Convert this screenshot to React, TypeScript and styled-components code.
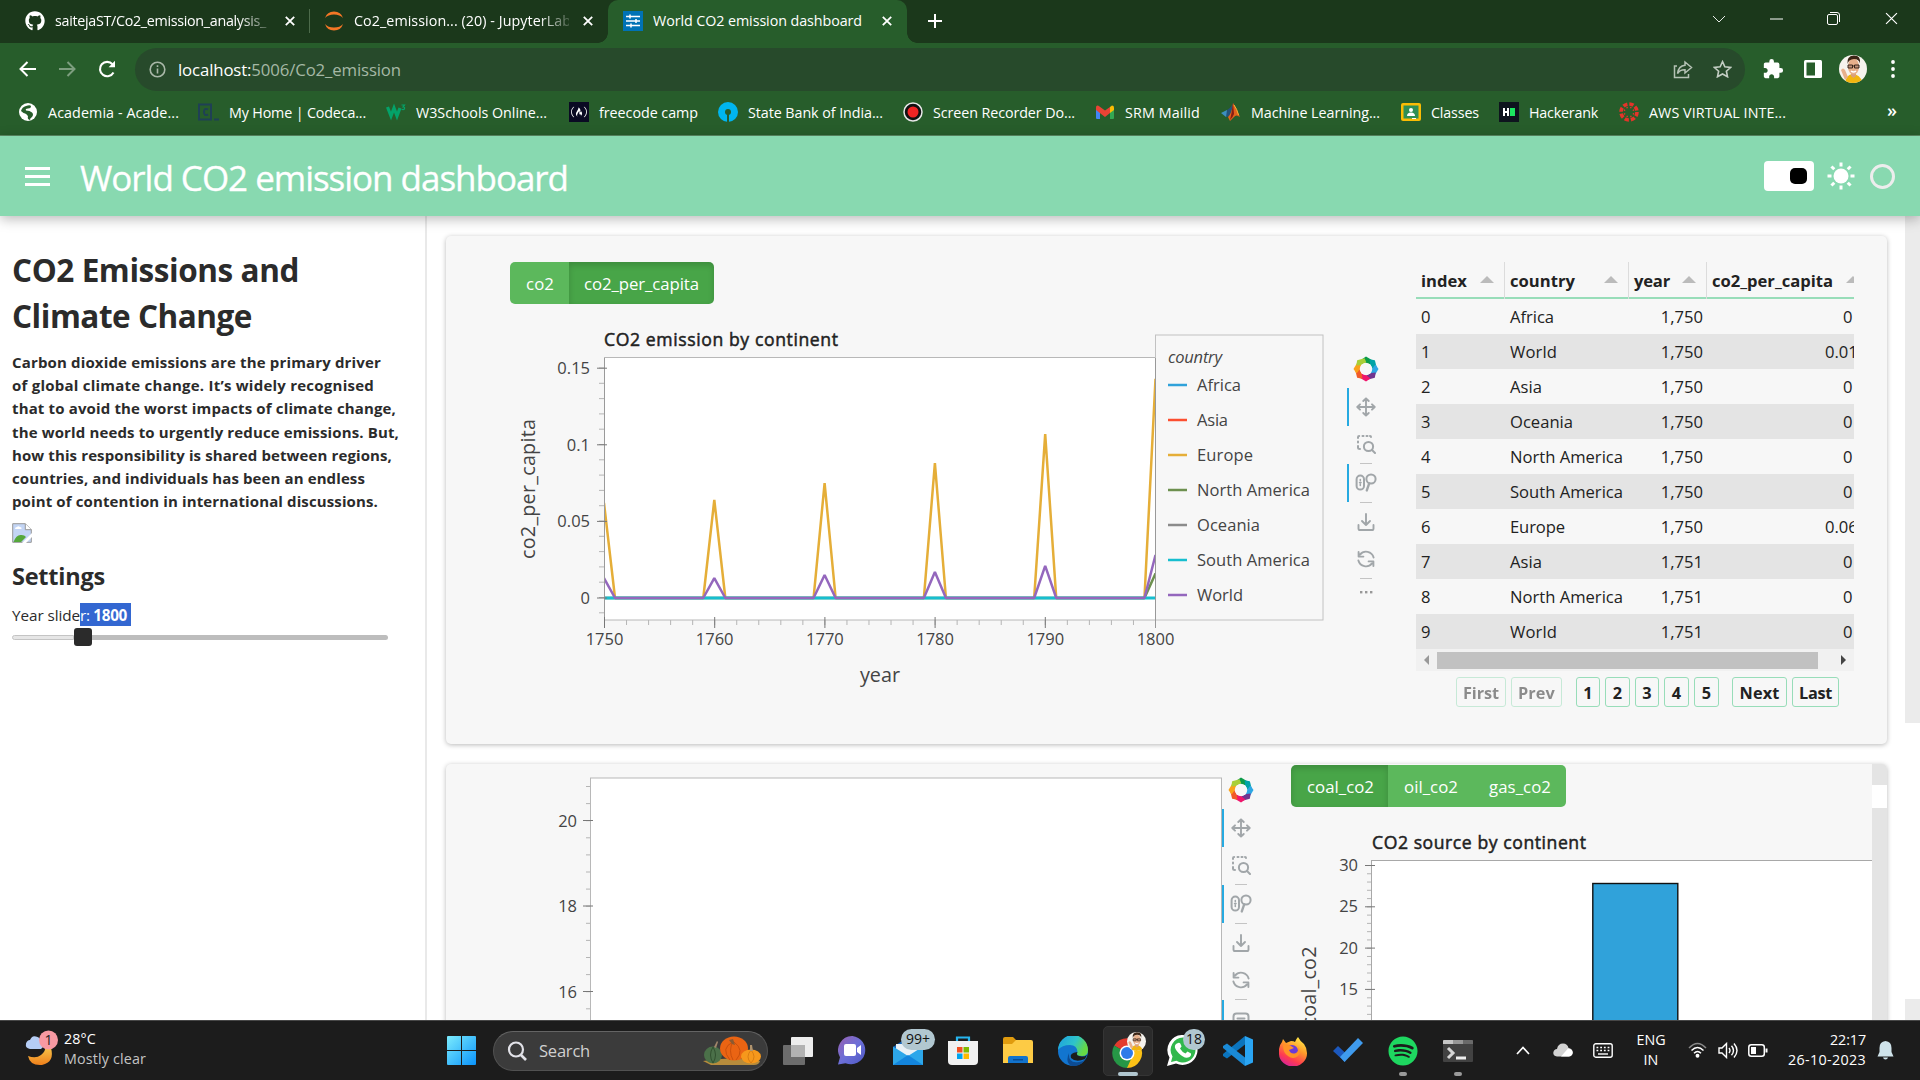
import React, { useLayoutEffect, useRef, useState } from 'react';
import styled, { createGlobalStyle, css } from 'styled-components';
import { FaGithub, FaSpotify, FaFirefoxBrowser, FaFreeCodeCamp } from 'react-icons/fa';
import { MdExtension } from 'react-icons/md';

const Global = createGlobalStyle`
  * { box-sizing: border-box; }
  body { margin: 0; background: #fff; overflow: hidden; }
  body, svg text { font-family: "Open Sans", "Noto Sans", sans-serif; }
  svg { display: block; flex: none; }
`;

/* ---------- text that spreads over a given width ---------- */
const FitText = styled.span<{ $w: number }>`
  display: block;
  flex: none;
  width: ${p => p.$w}px;
  white-space: nowrap;
`;
function Fit({ w, children }: { w: number; children: React.ReactNode }) {
  const ref = useRef<HTMLSpanElement>(null);
  const [spacing, setSpacing] = useState(0);
  useLayoutEffect(() => {
    const el = ref.current!;
    const n = (el.textContent || '').length;
    setSpacing((w - el.getBoundingClientRect().width) / n);
  }, [w]);
  return (
    <FitText $w={w}><span ref={ref} style={{ letterSpacing: spacing }}>{children}</span></FitText>
  );
}

const Screen = styled.div`
  width: 1920px; height: 1080px; overflow: hidden;
  display: flex; flex-direction: column; background: #fff;
`;

/* ---------- browser chrome ---------- */
const TabStrip = styled.div`
  height: 43px; flex: none; background: #1b381b; display: flex; color: #fff; font-size: 14.3px;
`;
const Tab = styled.div<{ $w: number; $active?: boolean; $pad: number; $line?: boolean }>`
  position: relative;
  width: ${p => p.$w}px; padding-left: ${p => p.$pad}px; height: 43px; padding-bottom: 2px;
  display: flex; align-items: center; gap: 10px;
  ${p => p.$line && css`&::after { content: ''; position: absolute; right: 0; top: 9px; height: 24px; width: 1px; background: #4d6b4b; }`}
  ${p => p.$active && css`
    background: #275d2b; border-radius: 10px 10px 0 0;
    &::before, &::after { content: ''; position: absolute; bottom: 0; width: 10px; height: 10px; }
    &::before { left: -10px; background: radial-gradient(circle at 0 0, transparent 9.5px, #275d2b 10px); }
    &::after { right: -10px; background: radial-gradient(circle at 100% 0, transparent 9.5px, #275d2b 10px); }
  `}
`;
const TabTitle = styled.div<{ $w: number; $fade?: boolean }>`
  width: ${p => p.$w}px; overflow: hidden;
  ${p => p.$fade && css`mask-image: linear-gradient(90deg, #000 86%, rgba(0,0,0,.2));`}
`;
const TabClose = styled.div<{ $gap: number }>`margin-left: ${p => p.$gap}px;`;
const PlusSlot = styled.div`padding: 13px 0 0 20px; flex: 1;`;
const WindowButtons = styled.div`display: flex; align-items: center; width: 230px; height: 37px;`;
const WinSlot = styled.div`width: 57.5px; display: flex; justify-content: center;`;

const NavBar = styled.div`
  height: 52px; flex: none; background: #275d2b; display: flex; align-items: center; padding-left: 7px;
`;
const NavSlot = styled.div<{ $w?: number }>`width: ${p => p.$w || 40}px; display: flex; justify-content: center;`;
const UrlBar = styled.div`
  width: 1610px; height: 43px; margin: 0 8px 0 8px; border-radius: 22px; background: #274a2b;
  display: flex; align-items: center; padding: 0 4px 0 14px; color: #a5b8a5; font-size: 16.8px;
  b { font-weight: 400; color: #fff; }
`;
const UrlText = styled.div`margin-left: 12px; flex: 1;`;
const Bookmarks = styled.div`
  height: 41px; flex: none; background: #275d2b; border-bottom: 1px solid #5c8a63;
  display: flex; align-items: center; padding: 0 0 6px 18px; color: #fff; font-size: 14.3px;
`;
const Bookmark = styled.div<{ $w: number }>`width: ${p => p.$w}px; display: flex; align-items: center; gap: 10px;`;
const More = styled.div`margin-left: auto; width: 33px; font-size: 18px; font-weight: 600; padding-bottom: 4px;`;

/* ---------- dashboard header ---------- */
const Header = styled.header`
  height: 80px; flex: none; background: #88d9b0; display: flex; align-items: center; padding: 0 25px 0 25px;
  color: #fff; font-size: 35px; position: relative; z-index: 2;
  box-shadow: 0 3px 12px rgba(0,0,0,.28);
`;
const Burger = styled.div`
  width: 25px; height: 19px; margin-right: 30px; border: solid #fff; border-width: 3px 0;
  display: flex; align-items: center;
  &::before { content: ''; width: 100%; height: 3px; background: #fff; }
`;
const HeadTitle = styled.div`flex: 1; padding-top: 4px; line-height: 44px; -webkit-text-stroke: .3px #fff;`;
const Toggle = styled.div`
  width: 50px; height: 30px; border-radius: 4px; background: #fff; padding: 7px; display: flex; justify-content: flex-end;
  &::after { content: ''; width: 17px; height: 16px; border-radius: 5px; background: #000; }
`;
const Sun = styled.svg`margin-left: 13px;`;
const Ring = styled.div`width: 25px; height: 25px; border: 3.5px solid #ededed; border-radius: 50%; margin-left: 15px;`;

const Body = styled.div`height: 804px; flex: none; display: flex; overflow: hidden;`;
const Sidebar = styled.aside`
  width: 427px; flex: none; border-right: 2px solid #e9e9e9; padding: 31px 13px 0 12px; color: #2b2b2b;
`;
const H1 = styled.h1`margin: 0; font-size: 31.5px; line-height: 46px; font-weight: 700;`;
const Para = styled.div`margin-top: 12px; font-size: 15px; font-weight: 700; line-height: 23.2px;`;
const H2 = styled.h2`margin: 14px 0 0; font-size: 23.5px; line-height: 38px; font-weight: 700;`;
const BrokenSlot = styled.div`margin-top: 10px;`;
const SliderLabel = styled.div`
  display: flex; margin-top: 8px; height: 23px; line-height: 24px; font-size: 15.3px;
`;
const Selected = styled.div`background: #3367d1; color: #fff; width: 51px; height: 23px; b { font-weight: 700; }`;
const Slider = styled.div`
  margin-top: 2px; width: 376px; height: 18px; display: flex; align-items: center;
`;
const TrackDone = styled.div`width: 62px; height: 5px; border: 1px solid #c4c4c4; background: #e6e6e6; border-radius: 3px 0 0 3px;`;
const Knob = styled.div`width: 18px; height: 18px; background: #2b2b2b; border-radius: 3px;`;
const TrackRest = styled.div`flex: 1; height: 5px; background: #bdbdbd; border-radius: 0 3px 3px 0;`;

const Main = styled.main`flex: 1; padding: 20px 0 0 19px; display: flex; flex-direction: column; gap: 20px;`;
const Card = styled.section<{ $h: number }>`
  width: 1441px; height: ${p => p.$h}px; flex: none; background: #f7f7f7; border-radius: 5px;
  box-shadow: 0 1px 5px rgba(0,0,0,.28); display: flex; overflow: hidden;
`;
const PageScroll = styled.div`
  width: 15px; flex: none; background: #ebebeb; padding-top: 507px;
  &::before { content: ''; display: block; height: 276px; background: #fff; }
`;

const Pane = styled.div<{ $l: number; $t: number; $w: number }>`
  flex: none; width: ${p => p.$w}px; margin-left: ${p => p.$l}px; padding-top: ${p => p.$t}px;
`;
const BtnGroup = styled.div`display: inline-flex; height: 42px; border-radius: 5px; overflow: hidden; vertical-align: top;`;
const Btn = styled.div<{ $w: number; $on?: boolean; $p: number }>`
  width: ${p => p.$w}px; height: 42px; padding: 0 0 0 ${p => p.$p}px; line-height: 44px; color: #fff; font-size: 16.8px;
  background: ${p => (p.$on ? '#48a548' : '#5cb85c')};
  ${p => p.$on && css`box-shadow: inset 0 3px 6px rgba(0,0,0,.16);`}
`;

/* ---------- plot toolbar ---------- */
const Tools = styled.div<{ $t: number; $w: number }>`
  width: ${p => p.$w}px; flex: none; padding-top: ${p => p.$t}px; display: flex; flex-direction: column;
`;
const ToolCell = styled.div<{ $on?: boolean; $h?: number; $lift?: number }>`
  height: ${p => p.$h || 38}px; width: 37px; flex: none; display: flex; align-items: center; justify-content: center;
  padding: 0 1px ${p => p.$lift || 0}px 0;
  border-left: 2px solid ${p => (p.$on ? '#26aae1' : 'transparent')};
`;
const ToolSep = styled.div`height: 1px; width: 12px; background: #c4c4c4; margin: 0 0 0 13px; flex: none;`;

function BokehLogo() {
  const c = ['#0c9b49', '#00a3a6', '#2da7e4', '#71358f', '#f0156b', '#f15a29', '#faa21b', '#a8cf38'];
  return (
    <svg width="26" height="26" viewBox="-13 -13 26 26">
      {c.map((k, i) => (
        <path key={k} transform={`rotate(${i * 45})`} fill={k} d="M0 -12.5 L6.6 -8.6 L5 -4.6 L-.8 -6.6 L-4.4 -9.4 Z" />
      ))}
      <circle r="6" fill="#f7f7f7" />
    </svg>
  );
}
const stroke = { fill: 'none', stroke: '#a1a6a9', strokeWidth: 2, strokeLinecap: 'round' as const, strokeLinejoin: 'round' as const };
const PanIcon = () => (
  <svg width="20" height="20" viewBox="0 0 20 20" {...stroke} strokeWidth={1.9}>
    <path d="M10 1.500v17M1.500 10h17M7.300 4 10 1.300 12.700 4M7.300 16l2.700 2.700 2.700-2.700M4 7.300 1.300 10 4 12.700M16 7.300l2.700 2.700L16 12.700" />
  </svg>
);
const BoxZoomIcon = () => (
  <svg width="20" height="20" viewBox="0 0 20 20" {...stroke}>
    <path d="M2 4V3.200Q2 2 3.200 2M6.500 2h1M10.500 2h1M14 2q1 0 1 1M2 7.500v1M2 12v1.500Q2 15 4 15" />
    <circle cx="12.500" cy="12.500" r="4.600" /><path d="m16 16 3 3" />
  </svg>
);
const WheelIcon = () => (
  <svg width="22" height="20" viewBox="0 0 22 20" {...stroke}>
    <rect x="1.600" y="2.600" width="7.400" height="14" rx="3.700" />
    <path d="M5.300 6.600v1M5.300 11.400v1M4.600 9.600h1.400" strokeWidth="1.600" />
    <circle cx="16" cy="6" r="4.600" /><path d="m14.200 10.400-2.400 7" strokeWidth="2.400" />
  </svg>
);
const SaveIcon = () => (
  <svg width="18" height="20" viewBox="0 0 18 20" {...stroke}>
    <path d="M9 2v11M5 9l4 4 4-4M1.500 13v3.400q0 1.600 1.600 1.600h11.800q1.600 0 1.600-1.600V13" strokeWidth="1.900" />
  </svg>
);
const ResetIcon = () => (
  <svg width="18" height="18" viewBox="0 0 18 18" {...stroke}>
    <path d="M16.600 7.500A7.800 7.800 0 0 0 3 4.600M1.600 2v4.600h4.800M1.400 10.500A7.800 7.800 0 0 0 15 13.400M16.400 16v-4.600h-4.800" strokeWidth="1.900" />
  </svg>
);
const HoverIcon = () => (
  <svg width="18" height="20" viewBox="0 0 18 20" {...stroke}>
    <rect x="1.500" y="1.500" width="15" height="15" rx="3" /><path d="M5.500 6.500h7M5.500 10.500h7" />
  </svg>
);
function ToolColumn({ top, width, more }: { top: number; width: number; more?: boolean }) {
  return (
    <Tools $t={top} $w={width}>
      <ToolCell $h={31} $lift={7}><BokehLogo /></ToolCell>
      <ToolCell $on $lift={1}><PanIcon /></ToolCell>
      <ToolCell $h={37} $lift={1}><BoxZoomIcon /></ToolCell>
      <ToolSep />
      <ToolCell $on><WheelIcon /></ToolCell>
      <ToolSep />
      <ToolCell><SaveIcon /></ToolCell>
      <ToolCell $h={37} $lift={1}><ResetIcon /></ToolCell>
      <ToolSep />
      {more ? (
        <ToolCell $h={26}>
          <svg width="14" height="3" viewBox="0 0 14 3" fill="#989898"><rect x="1" width="2.400" height="2.400" /><rect x="6" width="2.400" height="2.400" /><rect x="11" width="2.400" height="2.400" /></svg>
        </ToolCell>
      ) : <ToolCell $on $h={44}><HoverIcon /></ToolCell>}
    </Tools>
  );
}

/* ---------- charts ---------- */
const Label = ({ x, y, a = 'start', s = 16.5, w, children, ...r }: any) => (
  <text x={x} y={y} textAnchor={a} fontSize={s} fill="#444" {...(w ? { textLength: w, lengthAdjust: 'spacing' } : {})} {...r}>{children}</text>
);
const titleStyle = { s: 17.6, fill: '#222', stroke: '#222', strokeWidth: 0.5 };
const range = (n: number) => Array.from({ length: n }, (_, i) => i);

function EmissionChart() {
  const X = (yr: number) => 604 + (yr - 1750) * 11.03;
  const Y = (v: number) => 598 - v * 1532;
  const peaks = (v: number[]) => {
    const pts: string[] = [];
    v.forEach((p, i) => {
      const yr = 1750 + i * 10;
      if (i) pts.push(`${X(yr - 1)},${Y(0)}`);
      pts.push(`${X(yr)},${Y(p)}`);
      pts.push(`${X(yr + 1)},${Y(0)}`);
    });
    return pts.join(' ');
  };
  const legend: [string, string, number][] = [['Africa', '#30a2da', 44], ['Asia', '#fc4f30', 31], ['Europe', '#e5ae38', 56], ['North America', '#6d904f', 113], ['Oceania', '#8b8b8b', 63], ['South America', '#17becf', 113], ['World', '#9467bd', 46]];
  return (
    <svg width="830" height="400" viewBox="510 304 830 400">
      <clipPath id="plotA"><rect x="604" y="358" width="551" height="262" /></clipPath>
      <rect x="604.5" y="357.5" width="551" height="262.5" fill="#fff" stroke="#b8b8b8" />
      <g clipPath="url(#plotA)" fill="none" strokeWidth="2.5" strokeLinejoin="bevel">
        <polyline points={peaks([0.062, 0.064, 0.075, 0.088, 0.107, 0.143])} stroke="#e5ae38" />
        <polyline points={peaks([0, 0, 0, 0, 0, 0.016])} stroke="#6d904f" />
        <path d="M604 598H1155" stroke="#17becf" strokeWidth="2.800" />
        <polyline points={peaks([0.013, 0.013, 0.015, 0.017, 0.021, 0.028])} stroke="#9467bd" />
      </g>
      <path d="M604.5 358V620" stroke="#9a9a9a" />
      {range(18).map(i => { const y = 612.8 - i * 15.3; return y > 358 && <path key={i} d={`M599 ${y}H604`} stroke="#b5b5b5" />; })}
      {range(26).map(i => <path key={i} d={`M${604.5 + i * 22.04} 620V625`} stroke="#b5b5b5" />)}
      {['0', '0.05', '0.1', '0.15'].map((t, i) => (
        <g key={t}><path d={`M597 ${598 - i * 76.6}H607`} stroke="#777" /><Label x={590} y={604 - i * 76.6} a="end">{t}</Label></g>
      ))}
      {range(6).map(i => (
        <g key={i}><path d={`M${604.5 + i * 110.2} 617V628`} stroke="#777" /><Label x={604.5 + i * 110.2} y={645} a="middle">{1750 + i * 10}</Label></g>
      ))}
      <Label x={604} y={346} w={234} {...titleStyle}>CO2 emission by continent</Label>
      <Label x={880} y={682} a="middle" s={19.8}>year</Label>
      <Label x={0} y={0} w={140} s={19.8} transform="translate(535 559) rotate(-90)">co2_per_capita</Label>
      <rect x="1155.5" y="335" width="167.5" height="285" fill="#f7f7f7" stroke="#c2c2c2" />
      <path d="M1155.5 358V628" stroke="#999" />
      <Label x={1168} y={363} w={54} fontStyle="italic">country</Label>
      {legend.map(([n, c, w], i) => (
        <g key={n}><path d={`M1168 ${385 + i * 35}h19`} stroke={c} strokeWidth="2.500" /><Label x={1197} y={391 + i * 35} w={w}>{n}</Label></g>
      ))}
    </svg>
  );
}
function EmptyPlot() {
  return (
    <svg width="712" height="256" viewBox="510 764 712 256">
      <rect x="590.5" y="778" width="631" height="300" fill="#fff" stroke="#b8b8b8" />
      {range(15).map(i => <path key={i} d={`M586 ${786.5 + i * 17.1}H590`} stroke="#b5b5b5" />)}
      {['20', '18', '16'].map((t, i) => (
        <g key={t}><path d={`M583 ${820.5 + i * 85.5}H593`} stroke="#777" /><Label x={577} y={826.5 + i * 85.5} a="end">{t}</Label></g>
      ))}
    </svg>
  );
}
function SourceChart() {
  return (
    <svg width="581" height="213" viewBox="1291 807 581 213">
      <rect x="1371.5" y="860.5" width="520" height="200" fill="#fff" stroke="#a8a8a8" />
      {range(19).map(i => <path key={i} d={`M1367 ${865.5 + i * 8.27}H1371`} stroke="#b5b5b5" />)}
      {['30', '25', '20', '15'].map((t, i) => (
        <g key={t}><path d={`M1365 ${865.5 + i * 41.3}H1375`} stroke="#777" /><Label x={1358} y={871 + i * 41.3} a="end">{t}</Label></g>
      ))}
      <rect x="1592.8" y="883.5" width="85" height="200" fill="#30a2da" stroke="#111" strokeWidth="1.400" />
      <Label x={1372} y={849} w={214} {...titleStyle}>CO2 source by continent</Label>
      <Label x={0} y={0} w={80} s={19.8} transform="translate(1316 1026.5) rotate(-90)">coal_co2</Label>
    </svg>
  );
}

/* ---------- table ---------- */
const TablePane = styled.div`width: 438px; flex: none; padding-top: 26px; color: #222; font-size: 16.6px;`;
const Clip = styled.div`width: 438px; overflow: hidden;`;
const Row = styled.div<{ $alt?: boolean }>`
  display: grid; grid-template-columns: 89px 124px 78px 190px; height: 35px; line-height: 36px;
  background: ${p => (p.$alt ? '#e4e4e4' : 'transparent')};
`;
const HeadRow = styled(Row)`height: 37px; line-height: 37px; border-bottom: 2px solid #98ddb9; font-weight: 700;`;
const HeadCell = styled.div<{ $last?: boolean }>`
  padding: 0 10px 0 5px; display: flex; align-items: center; justify-content: space-between;
  border-right: 1px solid #dcdcdc; ${p => p.$last && 'justify-content: flex-start; gap: 13px;'}
`;
const Sort = styled.i`border: 7px solid transparent; border-bottom-color: #bbb; border-top: 0; margin-bottom: 3px;`;
const Cell = styled.div<{ $num?: boolean }>`
  padding: 0 5px; white-space: nowrap; ${p => p.$num && 'text-align: right; padding-right: 4px;'}
`;
const ValueCell = styled.div<{ $long?: boolean }>`padding-left: ${p => (p.$long ? 118 : 136)}px; white-space: nowrap;`;
const HScroll = styled.div`
  height: 22px; background: #f1f1f1; display: flex; align-items: center; padding: 0 8px; justify-content: space-between;
`;
const HThumb = styled.div`width: 381px; height: 17px; background: #c1c1c1; margin: 0 16px 0 0;`;
const Arrow = styled.i<{ $right?: boolean }>`
  border: 5px solid transparent; ${p => (p.$right ? 'border-left-color:#444; border-right: 0;' : 'border-right-color:#999; border-left: 0;')}
`;
const Pager = styled.div`display: flex; margin: 6px 0 0 40px; gap: 5px; font-weight: 700; font-size: 16.3px;`;
const PageBtn = styled.div<{ $w: number; $off?: boolean; $m?: number }>`
  width: ${p => p.$w}px; height: 30px; border: 1px solid #98ddb9; border-radius: 3px; margin-left: ${p => p.$m || 0}px;
  line-height: 30px; display: flex; justify-content: center; opacity: ${p => (p.$off ? 0.5 : 1)};
`;
const rows: [string, string, number, string, string][] = [
  ['0', 'Africa', 44, '1,750', '0'], ['1', 'World', 47, '1,750', '0.013'], ['2', 'Asia', 32, '1,750', '0'],
  ['3', 'Oceania', 63, '1,750', '0'], ['4', 'North America', 113, '1,750', '0'], ['5', 'South America', 113, '1,750', '0'],
  ['6', 'Europe', 55, '1,750', '0.062'], ['7', 'Asia', 32, '1,751', '0'], ['8', 'North America', 113, '1,751', '0'], ['9', 'World', 47, '1,751', '0'],
];
function DataTable() {
  return (
    <TablePane>
      <Clip>
        <HeadRow>
          <HeadCell><Fit w={46}>index</Fit><Sort /></HeadCell>
          <HeadCell><Fit w={65}>country</Fit><Sort /></HeadCell>
          <HeadCell><Fit w={36}>year</Fit><Sort /></HeadCell>
          <HeadCell $last><Fit w={121}>co2_per_capita</Fit><Sort /></HeadCell>
        </HeadRow>
        {rows.map(([i, c, w, y, v], n) => (
          <Row key={i} $alt={n % 2 === 1}>
            <Cell>{i}</Cell><Cell><Fit w={w}>{c}</Fit></Cell><Cell $num>{y}</Cell>
            <ValueCell $long={v.length > 1}>{v}</ValueCell>
          </Row>
        ))}
      </Clip>
      <HScroll><Arrow /><HThumb /><Arrow $right /></HScroll>
      <Pager>
        <PageBtn $w={50} $off><Fit w={36}>First</Fit></PageBtn>
        <PageBtn $w={51} $off><Fit w={37}>Prev</Fit></PageBtn>
        <PageBtn $w={24} $m={9}>1</PageBtn>
        <PageBtn $w={25}>2</PageBtn><PageBtn $w={24}>3</PageBtn><PageBtn $w={25}>4</PageBtn><PageBtn $w={25}>5</PageBtn>
        <PageBtn $w={55} $m={8}><Fit w={40}>Next</Fit></PageBtn>
        <PageBtn $w={47}><Fit w={33}>Last</Fit></PageBtn>
      </Pager>
    </TablePane>
  );
}
const InnerScroll = styled.div`
  width: 15px; margin-left: auto; background: #e4e4e4; padding-top: 21px;
  &::before { content: ''; display: block; height: 23px; background: #fff; }
`;

/* ---------- taskbar ---------- */
const Taskbar = styled.footer`
  height: 60px; flex: none; background: #1c1c1c; border-top: 1px solid #474747; display: flex; align-items: center;
  color: #fff; font-size: 14.3px; position: relative; z-index: 3;
`;
const Weather = styled.div`width: 433px; padding: 0 0 3px 24px; display: flex; gap: 6px; align-items: center;`;
const Stack = styled.div<{ $end?: boolean; $w?: number }>`
  ${p => p.$w && `width: ${p.$w}px;`}
  display: flex; flex-direction: column; line-height: 20px; align-items: ${p => (p.$end ? 'flex-end' : 'flex-start')};
`;
const Dim = styled.div`color: #c4c4c4;`;
const SearchBox = styled.div`
  width: 275px; height: 40px; border-radius: 20px; background: #3b3b3b; border: 1px solid #515151; border-top-color: #646464;
  display: flex; align-items: center; padding: 0 6px 0 13px; gap: 12px; margin: 0 2px 0 4px; font-size: 16.5px; color: #d0d0d0;
  svg:last-child { margin-left: auto; }
`;
const Slot = styled.div<{ $w?: number }>`
  width: ${p => p.$w || 55}px; height: 60px; flex: none; display: flex; align-items: center; justify-content: center; position: relative;
`;
const Tile = styled.div`
  width: 50px; height: 50px; border-radius: 5px; background: #2b2b2b; border: 1px solid #353535; display: flex; align-items: center; justify-content: center;
`;
const Running = styled.i<{ $on?: boolean }>`
  position: absolute; bottom: 5px; left: 50%; transform: translateX(-50%); height: 4px; border-radius: 2px;
  width: ${p => (p.$on ? 20 : 8)}px; background: ${p => (p.$on ? '#b1c7d0' : '#9a9a9a')};
`;
const Badge = styled.span<{ $w: number; $l: number }>`
  position: absolute; left: ${p => p.$l}px; top: 8px; width: ${p => p.$w}px; height: 21px; border-radius: 11px;
  background: #b1c7d0; color: #111; font-size: 14px; line-height: 20px; text-align: center;
`;
const Tray = styled.div`margin-left: auto; display: flex; align-items: center; width: 417px; padding-bottom: 1px;`;
const Center = styled.div<{ $w: number }>`width: ${p => p.$w}px; text-align: center; line-height: 20px;`;

const XIcon = ({ s = 10, w = 1.8 }) => <svg width={s} height={s} viewBox="0 0 10 10" stroke="#fff" strokeWidth={w}><path d="M.8.8l8.400 8.400M9.200.8.8 9.200" /></svg>;
const Face = ({ d }: { d: number }) => (
  <svg width={d} height={d} viewBox="0 0 28 28">
    <clipPath id={`face${d}`}><circle cx="14" cy="14" r="14" /></clipPath>
    <g clipPath={`url(#face${d})`}>
      <rect width="28" height="28" fill="#f6f3ee" />
      <path d="M6 28q1-8 7-9 8 0 11 9z" fill="#f2b50f" />
      <path d="M12 17h5v4l-2.500 2-2.500-2z" fill="#d9a07c" />
      <ellipse cx="14.500" cy="11.500" rx="5.500" ry="8" fill="#e7b08b" />
      <path d="M8.500 9q-1-8 6-8.500 7.500-.5 6.500 8-1-4.500-6-4.500Q9.500 4.500 8.500 9z" fill="#3b2415" />
      <path d="M9 10h4.500v3H9zM15.500 10H20v3h-4.500zM13.500 11h2" fill="#c4937a" stroke="#2a1c12" strokeWidth=".9" />
      <path d="M12 16q2.500 2 5 0" stroke="#fff" strokeWidth="1.500" fill="none" />
      <path d="M2 15q2-3 4 0l3 7-3 3z" fill="#e7b08b" />
    </g>
  </svg>
);

const bookmarks: [string, number, number, React.ReactNode][] = [
  ['Academia - Acade...', 131, 178, <svg width="20" height="20" viewBox="0 0 20 20"><circle cx="10" cy="10" r="9" fill="#fff" /><path d="M8 4q4-1.500 5 0 0 2.500-3 2.500t-2 2q4 0 6 2 2 2 0 4.500-2 1-2 3-3-1-2-3.500-1-3-4.500-3.500L3 9Q4 5 8 4z" fill="#275d2b" /></svg>],
  ['My Home | Codeca...', 137, 190, <svg width="23" height="20" viewBox="0 0 23 20" fill="none" stroke="#1f4055" strokeWidth="2"><rect x="3" y="2.500" width="12" height="15" /><path d="M12 7.500q-4-2-4 2.500t4 2.500M18 17.500h5" /></svg>],
  ['W3Schools Online...', 131, 183, <svg width="20" height="20" viewBox="0 0 20 20" fill="none" stroke="#04a269"><path d="M1.500 5 5 14l3-8 3 8L14 6" strokeWidth="3.200" /><path d="M15.500 3h3l-1.500 2q2 0 1.500 1.800-.8 1.200-3 .5" strokeWidth="1.200" /></svg>],
  ['freecode camp', 99, 149, <svg width="20" height="20" viewBox="0 0 20 20"><rect width="20" height="20" fill="#0a0a23" /><FaFreeCodeCamp x="2" y="2" size={16} color="#fff" /></svg>],
  ['State Bank of India...', 135, 185, <svg width="20" height="20" viewBox="0 0 20 20"><circle cx="10" cy="10" r="10" fill="#00b5ef" /><circle cx="10" cy="10" r="3" fill="#275d2b" /><path d="M9 10h2v10H9z" fill="#275d2b" /></svg>],
  ['Screen Recorder Do...', 142, 192, <svg width="20" height="20" viewBox="0 0 20 20"><circle cx="10" cy="10" r="9" fill="#111" stroke="#e8e8e8" strokeWidth="1.500" /><circle cx="10" cy="10" r="5.500" fill="#f12424" /></svg>],
  ['SRM Mailid', 75, 126, <svg width="20" height="20" viewBox="0 0 20 20"><path d="M1 6h4v11H2q-1 0-1-1z" fill="#4285f4" /><path d="M15 6h4v10q0 1-1 1h-3z" fill="#34a853" /><path d="M15 5l2-1.600q2 0 2 2V8l-4 3z" fill="#fbbc04" /><path d="M1 5.500Q1 3 3.500 3.800L10 8.500 15 5v6l-5 4-9-7z" fill="#ea4335" /></svg>],
  ['Machine Learning...', 129, 180, <svg width="20" height="20" viewBox="0 0 20 20"><path d="M0 11l6-3 3 4-4 3z" fill="#3d8fc0" /><path d="M6 8q4-2 6-7-1 8-3 13l-4 1z" fill="#25527a" /><path d="M12 1q2 2 7 14-4-3-6 0l-4 4-2-4Q11 11 12 1z" fill="#e2631d" /><path d="M12 1q-1 9-3 17 3-3 4-6z" fill="#8a1d12" /><path d="M13 3q3 4 4.500 10" stroke="#f5b335" fill="none" /></svg>],
  ['Classes', 48, 98, <svg width="20" height="20" viewBox="0 0 20 20"><rect y="1" width="20" height="18" rx="2" fill="#fbbc04" /><rect x="2.500" y="3.500" width="15" height="13" fill="#2f8f55" /><circle cx="10" cy="8" r="2" fill="#fff" /><path d="M6 14q0-3.500 4-3.500t4 3.500zM11 16h4v1h-4z" fill="#fff" /></svg>],
  ['Hackerank', 69, 120, <svg width="20" height="20" viewBox="0 0 20 20"><rect width="20" height="20" fill="#0e141e" /><path d="M4 6h2v3h2V6h2v8H8v-3H6v3H4z" fill="#fff" /><rect x="11" y="6" width="5" height="8" fill="#1ce760" /></svg>],
  ['AWS VIRTUAL INTE...', 137, 170, <svg width="20" height="20" viewBox="0 0 20 20" fill="#e4342a"><circle cx="10" cy="10" r="8" fill="none" stroke="#e4342a" strokeWidth="3.600" strokeDasharray="4.300 2" />{range(8).map(i => <circle key={i} cx="10" cy="5.200" r=".8" transform={`rotate(${i * 45 + 22} 10 10)`} />)}</svg>],
];

export default function App() {
  return (
    <Screen>
      <Global />
      <TabStrip>
        <Tab $w={310} $pad={25} $line>
          <FaGithub size={20} />
          <TabTitle $w={214} $fade><Fit w={211}>saitejaST/Co2_emission_analysis_</Fit></TabTitle>
          <TabClose $gap={6}><XIcon /></TabClose>
        </Tab>
        <Tab $w={298} $pad={14}>
          <svg width="20" height="22" viewBox="0 0 20 22" fill="#f37726"><path d="M1 8q2-6.500 9-6.500T19 8q-3-3.500-9-3.500T1 8zM1 14q2 6.500 9 6.500t9-6.500q-3 3.500-9 3.500T1 14z" /></svg>
          <TabTitle $w={215} $fade><Fit w={217}>Co2_emission... (20) - JupyterLab</Fit></TabTitle>
          <TabClose $gap={4}><XIcon /></TabClose>
        </Tab>
        <Tab $w={299} $pad={15} $active>
          <svg width="20" height="20" viewBox="0 0 20 20"><rect width="20" height="20" fill="#0072b5" /><path d="M3 5.500h14M3 10h14M3 14.500h14M7 3.500v4M13 8v4M8 12.500v4" stroke="#fff" strokeWidth="1.500" /></svg>
          <TabTitle $w={209}><Fit w={209}>World CO2 emission dashboard</Fit></TabTitle>
          <TabClose $gap={10}><XIcon /></TabClose>
        </Tab>
        <PlusSlot><svg width="16" height="16" viewBox="0 0 16 16" stroke="#fff" strokeWidth="2"><path d="M8 1v14M1 8h14" /></svg></PlusSlot>
        <WindowButtons>
          <WinSlot><svg width="14" height="8" viewBox="0 0 14 8" fill="none" stroke="#e6ebe6" strokeWidth="1"><path d="m1 1 6 6 6-6" /></svg></WinSlot>
          <WinSlot><svg width="13" height="2" viewBox="0 0 13 2"><path d="M0 1h13" stroke="#fff" /></svg></WinSlot>
          <WinSlot><svg width="13" height="13" viewBox="0 0 13 13" fill="none" stroke="#fff"><rect x=".5" y="2.500" width="10" height="10" rx="1.500" /><path d="M3 .5h7q2.500 0 2.500 2.500v7" /></svg></WinSlot>
          <WinSlot><XIcon s={13} w={0.9} /></WinSlot>
        </WindowButtons>
      </TabStrip>
      <NavBar>
        <NavSlot><svg width="17" height="16" viewBox="0 0 17 16" fill="none" stroke="#fff" strokeWidth="2"><path d="M17 8H2M8.500 1 1.500 8l7 7" /></svg></NavSlot>
        <NavSlot><svg width="17" height="16" viewBox="0 0 17 16" fill="none" stroke="#7d9e7f" strokeWidth="2"><path d="M0 8h15M8.500 1l7 7-7 7" /></svg></NavSlot>
        <NavSlot><svg width="18" height="18" viewBox="0 0 18 18" fill="none" stroke="#fff" strokeWidth="2.100"><path d="M15.500 12.500A7.200 7.200 0 1 1 14.500 4.200" /><path d="M17 .8v6.400h-6.400z" fill="#fff" stroke="none" /></svg></NavSlot>
        <UrlBar>
          <svg width="17" height="17" viewBox="0 0 17 17" fill="none" stroke="#a9b8a9" strokeWidth="1.600"><circle cx="8.500" cy="8.500" r="7.300" /><path d="M8.500 7.500v5M8.500 4.300v1.700" /></svg>
          <UrlText><Fit w={223}><b>localhost:</b>5006/Co2_emission</Fit></UrlText>
          <NavSlot><svg width="20" height="19" viewBox="0 0 20 19" fill="none" stroke="#b5c2b5" strokeWidth="1.500"><path d="M4 6H1.500v11.500h14V14M12 2l6.500 5.500L12 13v-3.300Q7 9.500 4.500 13.500 5.500 6 12 5.300z" /></svg></NavSlot>
          <NavSlot $w={38}><svg width="19" height="18" viewBox="0 0 20 19" fill="none" stroke="#c3cec3" strokeWidth="1.700"><path d="m10 1.800 2.500 5.400 6 .7-4.400 4 1.200 5.800-5.300-2.900-5.300 2.900 1.200-5.800-4.400-4 6-.7z" /></svg></NavSlot>
        </UrlBar>
        <NavSlot><MdExtension size={22} color="#fff" /></NavSlot>
        <NavSlot><svg width="18" height="18" viewBox="0 0 18 18"><rect width="18" height="18" rx="1.500" fill="#fff" /><rect x="2.500" y="2.500" width="8.500" height="13" fill="#275d2b" /></svg></NavSlot>
        <NavSlot><Face d={28} /></NavSlot>
        <NavSlot><svg width="4" height="18" viewBox="0 0 4 18" fill="#fff"><circle cx="2" cy="2" r="1.900" /><circle cx="2" cy="9" r="1.900" /><circle cx="2" cy="16" r="1.900" /></svg></NavSlot>
      </NavBar>
      <Bookmarks>
        {bookmarks.map(([t, w, slot, ic]) => <Bookmark key={t} $w={slot}>{ic}<Fit w={w}>{t}</Fit></Bookmark>)}
        <More>»</More>
      </Bookmarks>

      <Header>
        <Burger />
        <HeadTitle><Fit w={488}>World CO2 emission dashboard</Fit></HeadTitle>
        <Toggle />
        <Sun width="28" height="28" viewBox="-14 -14 28 28" fill="#fff"><circle r="7.500" />{range(8).map(i => <rect key={i} x="-1.500" y="-13.500" width="3" height="4" transform={`rotate(${i * 45})`} />)}</Sun>
        <Ring />
      </Header>

      <Body>
        <Sidebar>
          <H1><Fit w={287}>CO2 Emissions and</Fit><Fit w={240}>Climate Change</Fit></H1>
          <Para>
            <Fit w={369}>Carbon dioxide emissions are the primary driver</Fit>
            <Fit w={362}>of global climate change. It’s widely recognised</Fit>
            <Fit w={384}>that to avoid the worst impacts of climate change,</Fit>
            <Fit w={387}>the world needs to urgently reduce emissions. But,</Fit>
            <Fit w={380}>how this responsibility is shared between regions,</Fit>
            <Fit w={353}>countries, and individuals has been an endless</Fit>
            <Fit w={366}>point of contention in international discussions.</Fit>
          </Para>
          <BrokenSlot>
            <svg width="20" height="20" viewBox="0 0 20 20"><path d="M.7.7h12.600l6 6v12.600H.7z" fill="#c3d5f5" stroke="#979797" /><path d="M13.300.7v6h6" fill="#fff" stroke="#979797" /><path d="M3 6q0-2 2-2 1-1.500 3 0 2 0 1.500 2z" fill="#fff" /><path d="M1.500 19q3-8 8-7 3 0 4.500 2l-5 5z" fill="#55a83b" /><path d="M10 20 20 10v4l-6 6z" fill="#fff" /></svg>
          </BrokenSlot>
          <H2><Fit w={93}>Settings</Fit></H2>
          <SliderLabel><Fit w={68}>Year slide</Fit><Selected><Fit w={47}>r: <b>1800</b></Fit></Selected></SliderLabel>
          <Slider><TrackDone /><Knob /><TrackRest /></Slider>
        </Sidebar>
        <Main>
          <Card $h={508}>
            <Pane $l={64} $t={26} $w={837}>
              <BtnGroup>
                <Btn $w={59} $p={16}><Fit w={28}>co2</Fit></Btn>
                <Btn $w={145} $p={15} $on><Fit w={115}>co2_per_capita</Fit></Btn>
              </BtnGroup>
              <EmissionChart />
            </Pane>
            <ToolColumn top={121} width={69} more />
            <DataTable />
          </Card>
          <Card $h={400}>
            <Pane $l={64} $t={0} $w={712}><EmptyPlot /></Pane>
            <ToolColumn top={14} width={69} />
            <Pane $l={0} $t={1} $w={581}>
              <BtnGroup>
                <Btn $w={97} $p={16} $on><Fit w={67}>coal_co2</Fit></Btn>
                <Btn $w={84} $p={16}><Fit w={54}>oil_co2</Fit></Btn>
                <Btn $w={94} $p={17}><Fit w={62}>gas_co2</Fit></Btn>
              </BtnGroup>
              <SourceChart />
            </Pane>
            <InnerScroll />
          </Card>
        </Main>
        <PageScroll />
      </Body>

      <Taskbar>
        <Weather>
          <svg width="34" height="38" viewBox="0 0 34 38">
            <defs><linearGradient id="moon" x2="0" y2="1"><stop stopColor="#f8c64a" /><stop offset="1" stopColor="#ee7f1b" /></linearGradient></defs>
            <path d="M27 18q4 14-9 17-12 1-14-9 8 3 13-1t4-8z" fill="url(#moon)" />
            <path d="M6 19q-5-1-4-5.500Q3 10 6 10q2-5 6-3.500 5 1 5 5.500 3 1 2 5l-2 2z" fill="#b5cdf5" />
            <circle cx="24.500" cy="10" r="9.500" fill="#f899a2" /><text x="24.500" y="15" fontSize="14" textAnchor="middle" fill="#222">1</text>
          </svg>
          <Stack><Fit w={32}>28°C</Fit><Dim><Fit w={82}>Mostly clear</Fit></Dim></Stack>
        </Weather>
        <Slot $w={56}>
          <svg width="29" height="29" viewBox="0 0 29 29"><defs><linearGradient id="win" x2="1" y2="1"><stop stopColor="#7cecfd" /><stop offset="1" stopColor="#0a93fb" /></linearGradient></defs><path d="M1 0h13v14H0V1q0-1 1-1zM15 0h13q1 0 1 1v13H15zM0 15h14v14H1q-1 0-1-1zM15 15h14v13q0 1-1 1H15z" fill="url(#win)" /></svg>
        </Slot>
        <SearchBox>
          <svg width="20" height="20" viewBox="0 0 20 20" fill="none" stroke="#e2e2e8" strokeWidth="2.200"><circle cx="9" cy="8.500" r="7" /><path d="m14 14 5 5" strokeWidth="2.600" /></svg>
          <Fit w={51}>Search</Fit>
          <svg width="58" height="30" viewBox="0 0 58 30"><path d="M0 25q25-5 57 0-1 4-6 4H8z" fill="#b78c3c" /><ellipse cx="10" cy="19" rx="9" ry="8.500" fill="#4b7049" /><path d="M10 11q-5 8 0 16M10 11q5 8 0 16" stroke="#31502f" fill="none" /><path d="m11 11 3-6 1 1-2 6z" fill="#a1866b" /><ellipse cx="31" cy="12.500" rx="14" ry="12" fill="#ea6413" /><path d="M30 6q-13 6-3 18M31 6q11 8 2 18M30 5q-5 10 0 19" stroke="#c9500d" fill="none" /><path d="m29 8-3-4 4-1 2 6z" fill="#8c5a31" /><ellipse cx="48" cy="20.500" rx="10" ry="7" fill="#f6981c" /><path d="M48 14q-6 7 0 13M48 14q6 7 0 13" stroke="#d97d12" fill="none" /><path d="m47 15 0-6 2 0 1 6z" fill="#b0946e" /></svg>
        </SearchBox>
        <Slot><svg width="30" height="28" viewBox="0 0 30 28"><rect x="8" width="22" height="20" rx="1" fill="#ededed" /><rect y="8" width="22" height="20" rx="1" fill="#6c6c6c" /><path d="M8 8h14v12H8z" fill="#b2b2b2" /></svg></Slot>
        <Slot>
          <svg width="29" height="29" viewBox="0 0 29 29"><defs><linearGradient id="chat" x2="1" y2="1"><stop stopColor="#9a61b0" /><stop offset=".5" stopColor="#6c6fd8" /><stop offset="1" stopColor="#4d58c4" /></linearGradient></defs><path d="M14.500 0a14.200 14.200 0 1 1-7 27.200L0 28.500l2-7.200A14.200 14.200 0 0 1 14.500 0z" fill="url(#chat)" /><rect x="6" y="8" width="12" height="12" rx="2" fill="#fff" /><path d="m19 12 4-3v10l-4-3z" fill="#fff" /></svg>
        </Slot>
        <Slot>
          <svg width="30" height="28" viewBox="0 0 30 28"><path d="M0 10 15 0l15 10v18H0z" fill="#1565b8" /><path d="M3 7h24v8l-12 8L3 15z" fill="#e9f1f6" /><path d="M0 9.500 15 19 30 9.500V28H0z" fill="#2da7ea" /><path d="M0 28 15 18 30 28z" fill="#1385dd" /></svg>
          <Badge $w={34} $l={21}>99+</Badge>
        </Slot>
        <Slot>
          <svg width="30" height="31" viewBox="0 0 30 31"><path d="M9 7V2.500h12V7" fill="none" stroke="#26b5ef" strokeWidth="2.200" /><path d="M0 6h30v20q0 4-4 4H4q-4 0-4-4z" fill="#f1f1f1" /><path d="M9 12h5.500v5.500H9z" fill="#f25022" /><path d="M15.500 12H21v5.500h-5.500z" fill="#7fba00" /><path d="M9 18.500h5.500V24H9z" fill="#00a4ef" /><path d="M15.500 18.500H21V24h-5.500z" fill="#ffb900" /></svg>
        </Slot>
        <Slot><svg width="30" height="28" viewBox="0 0 30 28"><path d="M0 2q0-2 2-2h8l4 4-4 5H0z" fill="#e09b0e" /><path d="M0 7h9l4-4h15q2 0 2 2v21H0z" fill="#fdcb45" /><path d="M5 26v-5q0-2 2-2h16q2 0 2 2v5z" fill="#1273cd" /><path d="M10 22h10v1.500H10z" fill="#0a4c92" /></svg></Slot>
        <Slot>
          <svg width="30" height="30" viewBox="0 0 30 30">
            <defs><linearGradient id="edge1" x2="1" y2=".4"><stop stopColor="#1b9de2" /><stop offset=".6" stopColor="#2fc4c9" /><stop offset="1" stopColor="#66d944" /></linearGradient></defs>
            <circle cx="15" cy="15" r="15" fill="#1275cf" />
            <path d="M0 14A15 15 0 0 1 30 14q0 6-6 6-7 0-4.500-4Q19 9 12 9 4 9 0 14z" fill="url(#edge1)" />
            <path d="M11 17q-1 11 10 9 4-.5 6-2.500-5 8-14 6.300Q7 26 11 17z" fill="#0d4b92" />
            <path d="M19.500 16Q17 20 24 20.500q3 0 5-1.500l-2 4q-9 4-14-1-2-5 6.500-6z" fill="#1c1c1c" />
          </svg>
        </Slot>
        <Slot>
          <Tile>
            <svg width="36" height="38" viewBox="0 0 36 38">
              <path d="M17 21 4.200 13.500A15 15 0 0 1 30 13.500z" fill="#e33b2e" />
              <path d="M17 21 30 13.500A15 15 0 0 1 17 36z" fill="#fbc116" />
              <path d="M17 21 22 25 17 36A15 15 0 0 1 4.200 13.500z" fill="#269746" />
              <circle cx="17" cy="21" r="7.500" fill="#fff" /><circle cx="17" cy="21" r="6" fill="#2d7bea" />
              <g transform="translate(17 0)"><Face d={19} /></g>
            </svg>
          </Tile>
          <Running $on />
        </Slot>
        <Slot>
          <svg width="31" height="31" viewBox="0 0 31 31"><path d="M16 0a15 15 0 1 1-7 28.500L0 31l2.500-8.500A15 15 0 0 1 16 0z" fill="#fff" /><path d="M16 2.500a12.500 12.500 0 1 1-6.500 23.200L4 27l1.500-5.500A12.500 12.500 0 0 1 16 2.500z" fill="#31b84c" /><path d="M11 8q2-1 3 2l.5 1.500-1.500 2q2 3.500 5.500 5l2-2 3.500 2q.5 3-3 4-4 1-9-4t-4-8q.500-2 3-2.500z" fill="#fff" /></svg>
          <Badge $w={22} $l={28}>18</Badge>
        </Slot>
        <Slot><svg width="30" height="30" viewBox="0 0 30 30"><path d="M22 0l8 3.500v23L22 30z" fill="#2aa5f3" /><path d="M22 0v8.500L4 22.500 0 20v-2z" fill="#0b74bd" /><path d="M22 30v-8.500L4 7.500 0 10v2z" fill="#1a8ad6" /></svg></Slot>
        <Slot>
          <svg width="30" height="30" viewBox="0 0 30 30"><defs><linearGradient id="fx" x1=".8" y1="0" x2=".3" y2="1"><stop stopColor="#fff04a" /><stop offset=".4" stopColor="#ff9a2a" /><stop offset=".75" stopColor="#ff3b50" /><stop offset="1" stopColor="#d6239b" /></linearGradient></defs>
            <path d="M1 13Q2 8 4 6l1-3 3 4 5-2q3 0 4 1 1-3 3-5 2 4 6 7 3 4 3 9a14 13 0 0 1-28 1z" fill="url(#fx)" /><circle cx="14" cy="15" r="6" fill="#6a3bd6" /><path d="M5 9q5-1 8 1l3 2-5 2q2 5 7 3 3-2 2-6 4 5 0 9-5 4-10 0-5-3-5-11z" fill="#ff9327" /></svg>
        </Slot>
        <Slot><svg width="30" height="25" viewBox="0 0 30 25"><path d="M0 13l5-5 8.500 8-1.500 8z" fill="#1c58bd" /><path d="M11.500 24 7 19 25 0l5 5z" fill="#3f9bee" /></svg></Slot>
        <Slot><FaSpotify size={30} color="#1ed760" /><Running /></Slot>
        <Slot><svg width="30" height="22" viewBox="0 0 30 22"><rect width="30" height="22" rx="1" fill="#424242" /><path d="M0 1q0-1 1-1h9v4H0z" fill="#c6c6c6" /><path d="M10 0h10v4H10z" fill="#979797" /><path d="M20 0h9q1 0 1 1v3H20z" fill="#6a6a6a" /><path d="m5 8 5 5-5 5" stroke="#d6d6d6" strokeWidth="3" fill="none" /><path d="M13 18h10" stroke="#eee" strokeWidth="3" /></svg><Running /></Slot>
        <Tray>
          <Slot $w={40}><svg width="14" height="9" viewBox="0 0 14 9" fill="none" stroke="#fff" strokeWidth="1.700"><path d="m1 8 6-6.500L13 8" /></svg></Slot>
          <Slot $w={40}><svg width="20" height="14" viewBox="0 0 20 14"><path d="M4 13.500Q0 13 .3 9.500 1 6 4 6q1-5.500 6-5.500 4.500 0 5.500 4.500 4 .5 4.200 4.500-.2 3.500-4 4z" fill="#d2d2d2" /><path d="m8 13.500 7-8q4.500.5 4.700 4.200-.2 3.300-4 3.800z" fill="#fff" /></svg></Slot>
          <Slot $w={40}><svg width="20" height="15" viewBox="0 0 20 15" fill="none" stroke="#fff" strokeWidth="1.400"><rect x=".8" y=".8" width="18.400" height="13.400" rx="2" /><path d="M3.500 4.500h13M3.500 7.500h13" strokeDasharray="1.800 1.900" /><path d="M5 11h10" /></svg></Slot>
          <Center $w={56}>ENG<br />IN</Center>
          <Slot $w={36}><svg width="19" height="16" viewBox="0 0 19 16" fill="none" stroke="#fff" strokeWidth="1.500"><path d="M1 6q8.500-9 17 0" stroke="#888" /><path d="M3.500 8.500q6-6 12 0M6 11.200q3.500-3.500 7 0" /><circle cx="9.500" cy="13.800" r="1.200" fill="#fff" /></svg></Slot>
          <Slot $w={26}><svg width="20" height="17" viewBox="0 0 20 17" fill="none" stroke="#fff" strokeWidth="1.400"><path d="M1 6h3l4.500-4.500v14L4 11H1zM11 6q2 2.500 0 5M13.500 3.800q4 4.700 0 9.400M16 1.500q6 7 0 14" /></svg></Slot>
          <Slot $w={33}><svg width="20" height="13" viewBox="0 0 20 13"><rect x=".8" y=".8" width="15.500" height="11.400" rx="2.500" fill="none" stroke="#fff" strokeWidth="1.500" /><rect x="3" y="3" width="5" height="7" fill="#fff" /><path d="M18.500 4.500v4" stroke="#fff" strokeWidth="2" /></svg></Slot>
          <Stack $end $w={92}><Fit w={36}>22:17</Fit><Fit w={78}>26-10-2023</Fit></Stack>
          <Slot $w={38}><svg width="17" height="19" viewBox="0 0 17 19" fill="#cfe3ea"><path d="M8.500 0q6 .5 6 7v4l2 4.500H.5l2-4.500V7q0-6.500 6-7zM6 16.500h5q-.5 2-2.500 2T6 16.500z" /></svg></Slot>
        </Tray>
      </Taskbar>
    </Screen>
  );
}
